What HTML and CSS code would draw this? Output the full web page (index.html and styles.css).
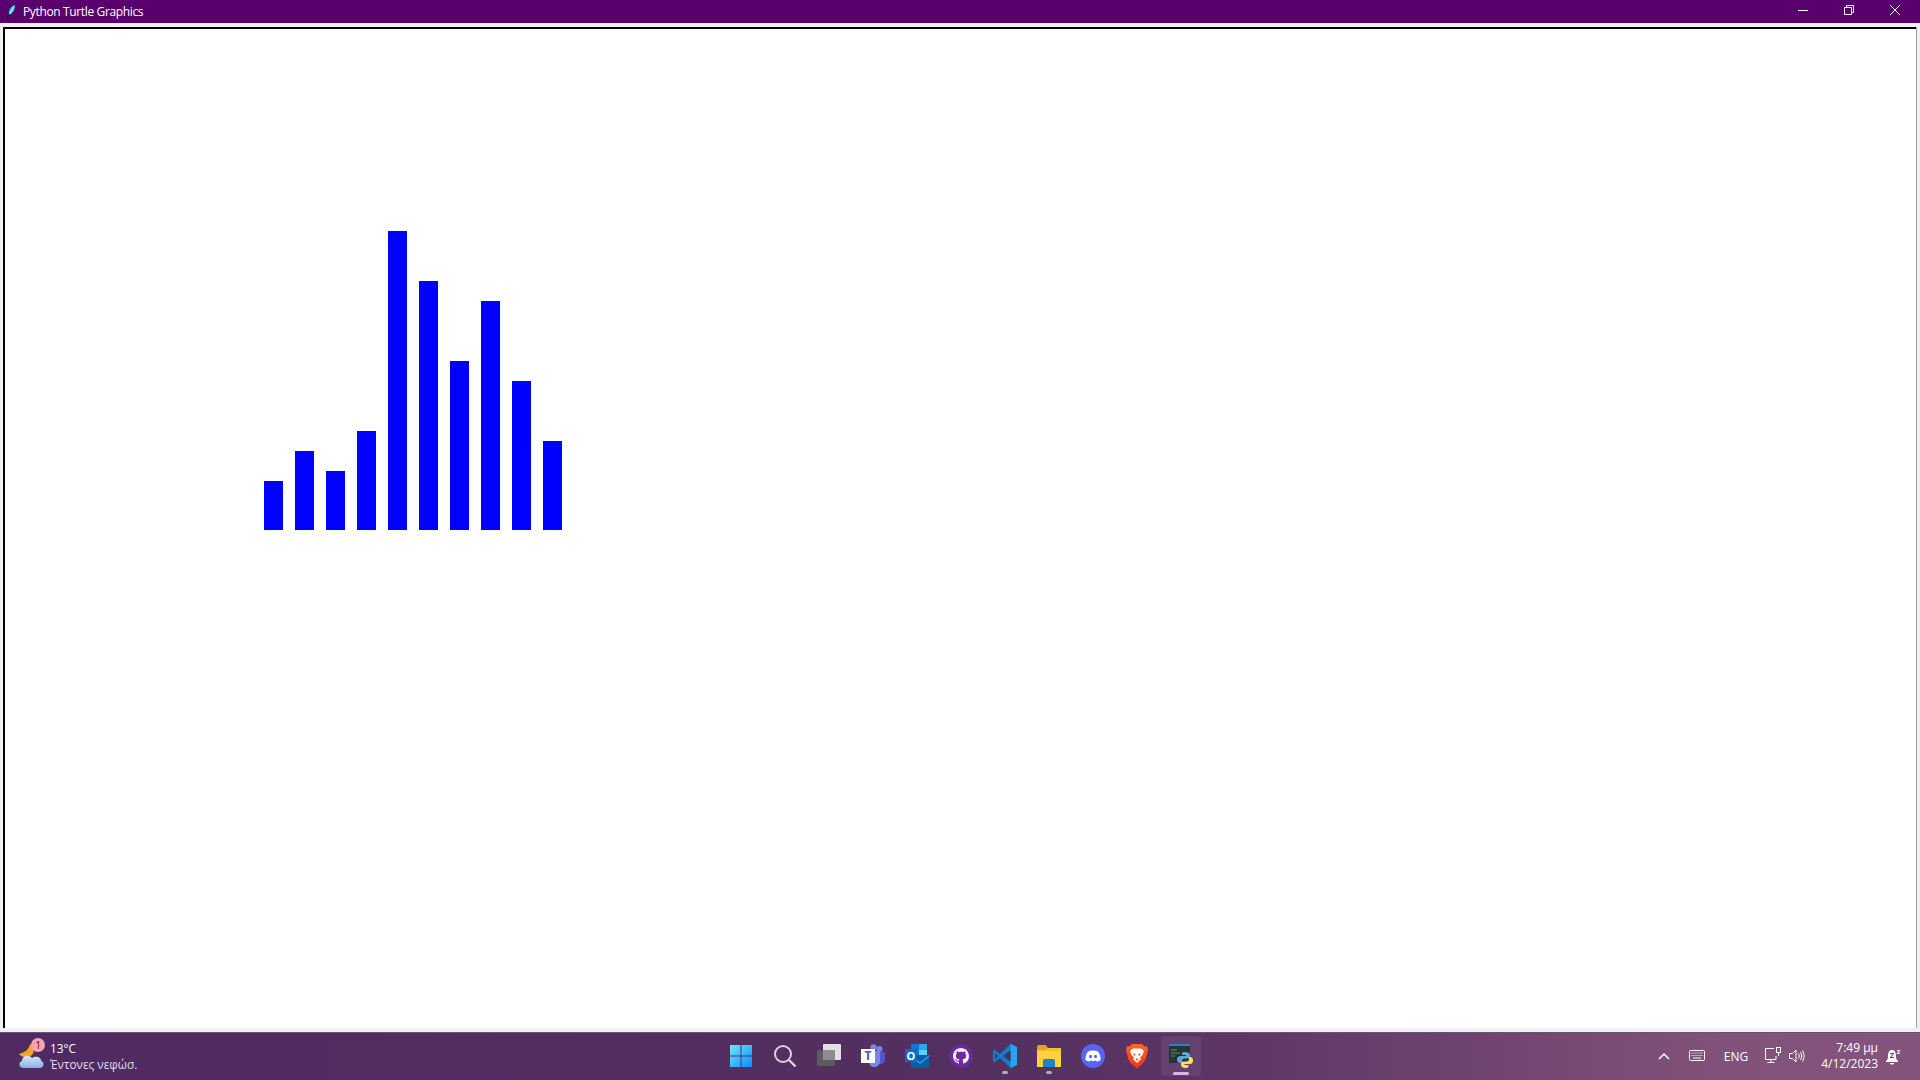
FILE: index.html
```html
<!DOCTYPE html>
<html lang="en">
<head>
    <meta charset="UTF-8">
    <title>Python Turtle Graphics</title>
    <link rel="stylesheet" href="styles.css">
</head>
<body>
    <header class="titlebar">
        <div class="title-left">
            <svg class="feather" width="10" height="16" viewBox="0 0 10 16">
                <path d="M1 15.5 L3 10" stroke="#10202c" stroke-width="1.2" fill="none"/>
                <path d="M3 11 C1 7 5 1 9.5 .5 C10 5 7 10.500 3 11 Z" fill="#6fb4ee" stroke="#0c2a48" stroke-width="1"/>
                <path d="M3.500 10 L7.500 3.500" stroke="#d8eeff" stroke-width="0.8"/>
            </svg>
            <span class="title-text">Python Turtle Graphics</span>
        </div>
        <div class="window-controls">
            <div class="control">
                <svg width="10" height="10" viewBox="0 0 10 10"><path d="M0 5.500H10" stroke="#fff" fill="none"/></svg>
            </div>
            <div class="control">
                <svg width="10" height="10" viewBox="0 0 10 10"><path d="M.5 2.500H7.500V9.500H.5Z M2.500 2.500V.5H9.500V7.500H7.500" stroke="#fff" fill="none"/></svg>
            </div>
            <div class="control">
                <svg width="10" height="10" viewBox="0 0 10 10"><path d="M0 0L10 10M10 0L0 10" stroke="#fff" fill="none"/></svg>
            </div>
        </div>
    </header>

    <main class="window-body">
        <div class="canvas">
            <div class="chart">
                <div class="bar" style="height: 49px"></div>
                <div class="bar" style="height: 79px"></div>
                <div class="bar" style="height: 59px"></div>
                <div class="bar" style="height: 99px"></div>
                <div class="bar" style="height: 299px"></div>
                <div class="bar" style="height: 249px"></div>
                <div class="bar" style="height: 169px"></div>
                <div class="bar" style="height: 229px"></div>
                <div class="bar" style="height: 149px"></div>
                <div class="bar" style="height: 89px"></div>
            </div>
        </div>
    </main>

    <footer class="taskbar">
        <div class="weather">
            <div class="weather-icon">
                <svg width="28" height="26" viewBox="0 0 28 26">
                    <defs>
                        <linearGradient id="cloud" x1="0" y1="0" x2="0" y2="1">
                            <stop offset="0" stop-color="#dbe6f6"/>
                            <stop offset="1" stop-color="#7fb2e6"/>
                        </linearGradient>
                    </defs>
                    <path d="M12 1 C11 6 8 9 1 11 C4 15 10 15 14 12 C17 9 16 3 12 1 Z" fill="#f5a623"/>
                    <path d="M5 25 C1 25 0 19 4 18 C4 13 11 11 14 15 C18 12 24 15 23 18 C27 19 26 25 22 25 Z" fill="url(#cloud)"/>
                </svg>
                <span class="weather-badge">1</span>
            </div>
            <div class="weather-text">
                <span>13°C</span>
                <span class="weather-desc">Έντονες νεφώσ.</span>
            </div>
        </div>

        <div class="task-icons">
            <div class="task-slot">
                <svg width="24" height="24" viewBox="0 0 24 24">
                    <defs>
                        <linearGradient id="winlogo" x1="0" y1="0" x2="1" y2="1">
                            <stop offset="0" stop-color="#6ce8fb"/>
                            <stop offset="1" stop-color="#0b8bff"/>
                        </linearGradient>
                    </defs>
                    <path d="M1 1H11.500V11.500H1Z M12.500 1H23V11.500H12.500Z M1 12.500H11.500V23H1Z M12.500 12.500H23V23H12.500Z" fill="url(#winlogo)"/>
                </svg>
            </div>
            <div class="task-slot">
                <svg width="24" height="24" viewBox="0 0 24 24">
                    <circle cx="10" cy="10" r="8" fill="none" stroke="#d9d3dc" stroke-width="2"/>
                    <path d="M16 16L22.500 22.500" stroke="#d9d3dc" stroke-width="2.400"/>
                </svg>
            </div>
            <div class="task-slot">
                <svg width="24" height="24" viewBox="0 0 24 24">
                    <rect x="0" y="6" width="18" height="16" rx="1" fill="#5e5a60"/>
                    <rect x="6" y="0" width="18" height="16" rx="1" fill="#f0eff1" fill-opacity=".92"/>
                    <rect x="6" y="6" width="12" height="10" fill="#8f8b91"/>
                </svg>
            </div>
            <div class="task-slot">
                <svg width="24" height="24" viewBox="0 0 24 24">
                    <circle cx="18.500" cy="5" r="3" fill="#7b83eb"/>
                    <circle cx="12.500" cy="3.500" r="3.200" fill="#7b83eb"/>
                    <path d="M16 8H24V15C24 19 21 20 19 20L16 20Z" fill="#5059c9"/>
                    <path d="M8 7H19V17C19 21 16 23 13 23C10 23 8 21 8 17Z" fill="#7b83eb"/>
                    <rect x="0" y="5" width="14" height="14" fill="#fff"/>
                    <text class="icon-letter teams-letter" x="7" y="16">T</text>
                </svg>
            </div>
            <div class="task-slot">
                <svg width="24" height="24" viewBox="0 0 24 24">
                    <rect x="6" y="0" width="16" height="12" fill="#0f78d4"/>
                    <rect x="14" y="0" width="8" height="6" fill="#28a8ea"/>
                    <rect x="14" y="6" width="8" height="6" fill="#50d9ff"/>
                    <path d="M6 11H24V24H6Z" fill="#0a5da8"/>
                    <path d="M6 11L15 18L24 11V13L15 20L6 13Z" fill="#1f9ce8"/>
                    <rect x="0" y="5" width="12" height="13" fill="#0f6cbd"/>
                    <text class="icon-letter outlook-letter" x="6" y="15.500">O</text>
                </svg>
            </div>
            <div class="task-slot">
                <svg width="24" height="24" viewBox="0 0 24 24">
                    <circle cx="12" cy="12" r="12" fill="#6b2a98"/>
                    <g transform="translate(4 4)">
                        <path fill="#f4eef8" d="M8 0C3.58 0 0 3.58 0 8c0 3.54 2.29 6.53 5.47 7.59.4.07.55-.17.55-.38 0-.19-.01-.82-.01-1.49-2.01.37-2.53-.49-2.69-.94-.09-.23-.48-.94-.82-1.13-.28-.15-.68-.52-.01-.53.63-.01 1.08.58 1.23.82.72 1.21 1.87.87 2.33.66.07-.52.28-.87.51-1.07-1.78-.2-3.64-.89-3.64-3.95 0-.87.31-1.59.82-2.15-.08-.2-.36-1.02.08-2.12 0 0 .67-.21 2.2.82.64-.18 1.32-.27 2-.27.68 0 1.36.09 2 .27 1.53-1.04 2.2-.82 2.2-.82.44 1.1.16 1.92.08 2.12.51.56.82 1.27.82 2.15 0 3.07-1.87 3.75-3.65 3.95.29.25.54.73.54 1.48 0 1.07-.01 1.93-.01 2.2 0 .21.15.46.55.38A8.013 8.013 0 0016 8c0-4.42-3.58-8-8-8z"/>
                    </g>
                </svg>
            </div>
            <div class="task-slot has-dot">
                <svg width="26" height="26" viewBox="0 0 26 26">
                    <path d="M18.500 1L25 4V22L18.500 25L8 15L3 19L1 18V8L3 7L8 11Z" fill="#0a7fcb"/>
                    <path d="M18.500 1L25 4V22L18.500 25Z" fill="#2aa4ef"/>
                    <path d="M18.500 7.500V18.500L11 13Z" fill="#4f2d63"/>
                    <path d="M3 10L6 13L3 16Z" fill="#4f2d63"/>
                </svg>
                <span class="dot"></span>
            </div>
            <div class="task-slot has-dot">
                <svg width="24" height="24" viewBox="0 0 24 24">
                    <path d="M0 3C0 2 .6 1 2 1H8.500L11 4H24V8H0Z" fill="#e6a51f"/>
                    <path d="M0 6H24V23H0Z" fill="#fdd13f"/>
                    <path d="M0 6H9L11 4H24V7H0Z" fill="#f6bf2c"/>
                    <path d="M6 17C6 15.500 7 15 8 15H16C17 15 18 15.500 18 17V23H6Z" fill="#1f84cf"/>
                </svg>
                <span class="dot"></span>
            </div>
            <div class="task-slot">
                <svg width="24" height="24" viewBox="0 0 24 24">
                    <circle cx="12" cy="12" r="12" fill="#5865f2"/>
                    <path d="M7 7.500C10 6.300 14 6.300 17 7.500C18.800 10 19.800 13 19.500 16C18.300 16.900 17 17.500 15.800 17.800L15 16.500C13 17.100 11 17.100 9 16.500L8.200 17.800C7 17.500 5.700 16.900 4.500 16C4.200 13 5.200 10 7 7.500Z" fill="#fff"/>
                    <ellipse cx="9.500" cy="12.500" rx="1.500" ry="1.700" fill="#5865f2"/>
                    <ellipse cx="14.500" cy="12.500" rx="1.500" ry="1.700" fill="#5865f2"/>
                </svg>
            </div>
            <div class="task-slot">
                <svg width="22" height="25" viewBox="0 0 22 25">
                    <defs>
                        <linearGradient id="brave" x1="0" y1="0" x2="0" y2="1">
                            <stop offset="0" stop-color="#ff6a1f"/>
                            <stop offset="1" stop-color="#f12f14"/>
                        </linearGradient>
                    </defs>
                    <path d="M6 0H16L18.500 2.500L21 2L22 6L20 14C19 18 14 22 11 25C8 22 3 18 2 14L0 6L1 2L3.500 2.500Z" fill="url(#brave)"/>
                    <path d="M4 7L7 4.500H15L18 7L16.500 11L14 13.500L15 15L11 19L7 15L8 13.500L5.500 11Z" fill="#fff"/>
                    <path d="M7 9L10 10.500L8.500 12Z M15 9L12 10.500L13.500 12Z" fill="#f4541c"/>
                    <path d="M9.500 15L11 14.300L12.500 15L11 17Z" fill="#f4541c"/>
                </svg>
            </div>
            <div class="task-slot active">
                <svg width="24" height="24" viewBox="0 0 24 24">
                    <rect x="0" y="0" width="21" height="19" fill="#2a3438"/>
                    <rect x="0" y="0" width="21" height="2" fill="#2f7fc0"/>
                    <path d="M2 6H8M2 9H11M2 12H6" stroke="#4f9a5a" stroke-width="1.200"/>
                    <path d="M16 8C12.500 8 13 9.500 13 11H17V12H11.500C9.500 12 8 13.500 8 15.500C8 17.500 9.500 19 11 19H13V17C13 15.500 14 14.500 15.500 14.500H18.500C20 14.500 21 13.500 21 12V11C21 9 19 8 16 8Z" fill="#5ba6dc"/>
                    <path d="M16.500 24C20 24 19.500 22.500 19.500 21H15.500V20H21C23 20 24 18.500 24 16.500C24 14.500 23 13 21.500 13H20V15C20 16.500 19 17.500 17.500 17.500H14.500C13 17.500 12 18.500 12 20V21C12 23 14 24 16.500 24Z" fill="#ffdc5a"/>
                </svg>
                <span class="active-line"></span>
            </div>
        </div>

        <div class="tray">
            <svg class="tray-chevron" width="12" height="8" viewBox="0 0 12 8"><path d="M1 7L6 2L11 7" stroke="#fff" stroke-width="1.500" fill="none"/></svg>
            <svg class="tray-keyboard" width="16" height="12" viewBox="0 0 16 12">
                <rect x=".5" y=".5" width="15" height="10" rx="1" fill="none" stroke="#fff"/>
                <path d="M2.500 3H13.500M2.500 5.500H13.500" stroke="#fff" stroke-dasharray="1 1"/>
                <path d="M4 8H12" stroke="#fff"/>
            </svg>
            <span class="tray-lang">ENG</span>
            <svg class="tray-net" width="16" height="18" viewBox="0 0 16 18">
                <path d="M9 1.500H.5V12.500H11V9" stroke="#fff" fill="none"/>
                <path d="M6 12.500V15.500M2.500 15.500H9.500" stroke="#fff" fill="none"/>
                <rect x="11.500" y=".5" width="4" height="5" fill="none" stroke="#fff"/>
                <path d="M13.500 5.500V9" stroke="#fff"/>
            </svg>
            <svg class="tray-sound" width="16" height="14" viewBox="0 0 16 14">
                <path d="M.5 4.500H3.500L7 1V13L3.500 9.500H.5Z" fill="none" stroke="#fff"/>
                <path d="M9.500 4.500C10.500 6 10.500 8 9.500 9.500M11.500 3C13 5.500 13 8.500 11.500 11M13.500 1.500C15.500 5 15.500 9 13.500 12.500" fill="none" stroke="#fff"/>
            </svg>
            <div class="clock">
                <span>7:49 μμ</span>
                <span>4/12/2023</span>
            </div>
            <svg class="tray-bell" width="17" height="20" viewBox="0 -3 17 20">
                <path d="M7 1C3.500 1 3 4.500 3 8C3 10 2 11 1 12V13H13V12C12 11 11 10 11 8C11 4.500 10.500 1 7 1Z" fill="#fff"/>
                <path d="M5 14H9C9 16 5 16 5 14Z" fill="#fff"/>
                <text class="bell-z" x="7" y="9">Z</text>
                <text class="bell-z" x="13.500" y="5">z</text>
            </svg>
        </div>
    </footer>
</body>
</html>
```

FILE: styles.css
```css
html, body {
    height: 100%;
    margin: 0;
}
body {
    display: flex;
    flex-direction: column;
    height: 1080px;
    overflow: hidden;
    font-family: "Open Sans", "Noto Sans", sans-serif;
    background-color: #f0f0f0;
}
.titlebar {
    display: flex;
    justify-content: space-between;
    height: 23px;
    background-color: #5a006e;
    color: white;
}
.title-left {
    display: flex;
    align-items: center;
    padding-left: 6px;
}
.title-text {
    margin-left: 7px;
    font-size: 12px;
    letter-spacing: -0.36px;
}
.window-controls {
    display: flex;
    padding-right: 2px;
}
.control {
    display: flex;
    justify-content: center;
    align-items: center;
    width: 46px;
    height: 20px;
}
.window-body {
    flex: 1;
    display: flex;
    padding: 4px 4px 4px 3px;
}
.canvas {
    flex: 1;
    display: flex;
    align-items: flex-start;
    background: white;
    border-top: 2px solid black;
    border-left: 2px solid black;
    box-shadow: 1px 0 0 #a0a0a0;
}
.chart {
    display: flex;
    align-items: flex-end;
    gap: 12px;
    height: 299px;
    margin-top: 202px;
    margin-left: 259px;
}
.bar {
    width: 19px;
    background-color: #0000ff;
}

.taskbar {
    display: grid;
    grid-template-columns: 1fr auto 1fr;
    align-items: center;
    height: 48px;
    background: linear-gradient(90deg, #4f2a63 0%, #53305f 50%, #5a3464 62%, #83527a 90%, #85547c 100%);
    color: white;
    box-shadow: inset 0 1px 0 #6a5473;
}
.weather {
    display: flex;
    align-items: center;
    padding-left: 18px;
}
.weather-icon {
    position: relative;
    width: 28px;
    height: 26px;
}
.weather-badge {
    position: absolute;
    top: -5px;
    left: 13px;
    width: 14px;
    height: 14px;
    border-radius: 50%;
    background-color: #f9a3ad;
    color: #3b1a28;
    font-size: 10px;
    line-height: 14px;
    text-align: center;
}
.weather-text {
    display: flex;
    flex-direction: column;
    gap: 1px;
    margin-left: 4px;
    font-size: 11.8px;
    line-height: 15px;
}
.weather-desc {
    color: #e4dbe8;
}
.task-icons {
    display: flex;
    padding-left: 2px;
}
.task-slot {
    position: relative;
    display: flex;
    justify-content: center;
    align-items: center;
    width: 44px;
    height: 40px;
}
.task-slot.active::before {
    content: "";
    position: absolute;
    top: 0;
    left: 2px;
    width: 40px;
    height: 40px;
    border-radius: 4px;
    background-color: rgba(255, 255, 255, 0.07);
}
.task-slot svg {
    position: relative;
}
.dot {
    position: absolute;
    bottom: 2px;
    left: 19px;
    width: 6px;
    height: 3px;
    border-radius: 2px;
    background-color: #b9a6c0;
}
.active-line {
    position: absolute;
    bottom: 1px;
    left: 14px;
    width: 16px;
    height: 3px;
    border-radius: 2px;
    background-color: #e3b0ea;
}
.icon-letter {
    font-family: "Open Sans", sans-serif;
    font-weight: 700;
    text-anchor: middle;
}
.teams-letter {
    font-size: 12px;
    fill: #4b53bc;
}
.outlook-letter {
    font-size: 11px;
    fill: #fff;
}
.tray {
    display: flex;
    align-items: center;
    justify-content: flex-end;
    padding-right: 18px;
}
.tray-keyboard {
    margin-left: 19px;
}
.tray-lang {
    margin-left: 19px;
    font-size: 12px;
}
.tray-net {
    margin-left: 17px;
}
.tray-sound {
    margin-left: 8px;
}
.clock {
    display: flex;
    flex-direction: column;
    align-items: flex-end;
    margin-left: 16px;
    font-size: 12px;
    line-height: 16px;
}
.tray-bell {
    margin-left: 7px;
}
.bell-z {
    font-family: "Open Sans", sans-serif;
    font-size: 7px;
    font-weight: 700;
    text-anchor: middle;
    fill: #5a3464;
}
.bell-z + .bell-z {
    fill: #fff;
}
```
